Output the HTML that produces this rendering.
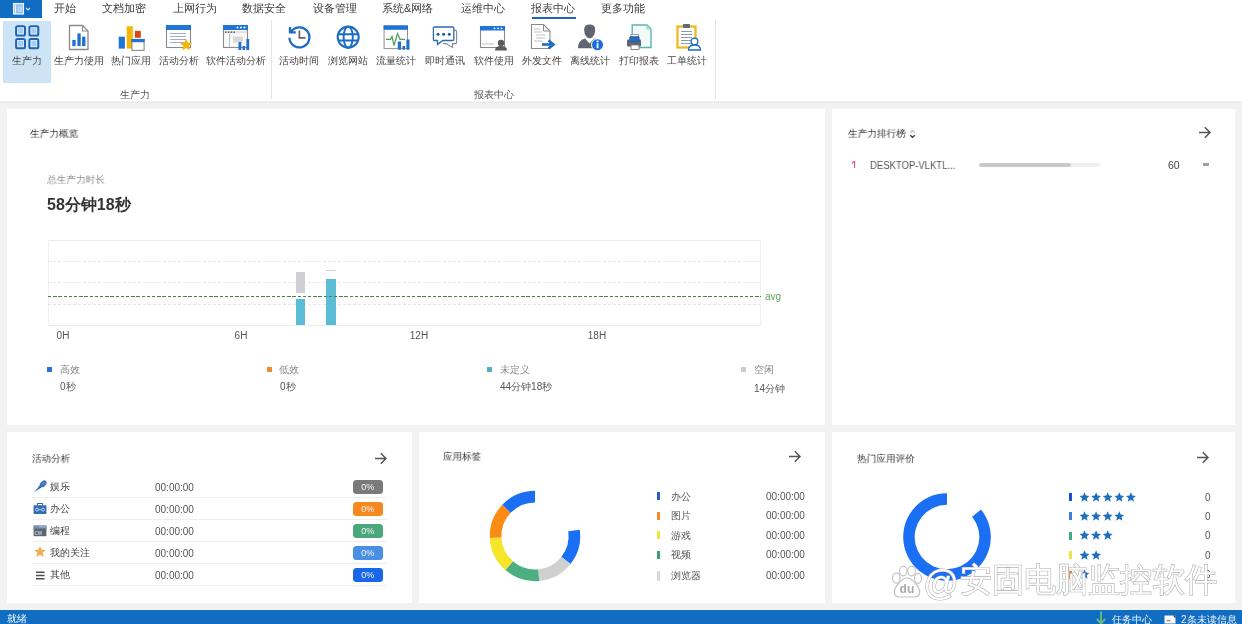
<!DOCTYPE html>
<html><head><meta charset="utf-8"><style>
html,body{margin:0;padding:0;}
body{width:1242px;height:624px;overflow:hidden;position:relative;font-family:"Liberation Sans", sans-serif;background:#f0f0f0;}
.t{position:absolute;white-space:nowrap;will-change:transform;}
.r{position:absolute;display:block;will-change:transform;}
</style></head><body>
<div class="r" style="left:0px;top:0px;width:1242px;height:101px;background:#ffffff;"></div>
<div class="r" style="left:0px;top:101px;width:1242px;height:509px;background:#f2f2f2;"></div>
<div class="r" style="left:0px;top:102px;width:1242px;height:1px;background:#e8e8e8;"></div>
<div class="r" style="left:0px;top:610px;width:1242px;height:14px;background:#106dc2;"></div>
<div class="r" style="left:0px;top:0px;width:42px;height:18px;background:#106dc2;"></div>
<svg class="r" style="left:12px;top:2px;" width="22" height="15" viewBox="0 0 22 15"><rect x="1.6" y="1.6" width="9.8" height="10.4" fill="#8fbdf0" stroke="#e8f2fc" stroke-width="1.3"/><path d="M3.6 2.5 V11.5" stroke="#f4f8ff" stroke-width="1.1"/><rect x="5.5" y="4" width="4.5" height="6" fill="#b5d3f5"/><path d="M14 6 l2 2 l2 -2" fill="none" stroke="#cfe2f7" stroke-width="1.1"/></svg>
<div class="t" style="left:54.0px;top:3px;font-size:11px;line-height:11px;color:#3a3a3a;font-weight:normal;">开始</div>
<div class="t" style="left:101.8px;top:3px;font-size:11px;line-height:11px;color:#3a3a3a;font-weight:normal;">文档加密</div>
<div class="t" style="left:172.8px;top:3px;font-size:11px;line-height:11px;color:#3a3a3a;font-weight:normal;">上网行为</div>
<div class="t" style="left:242.4px;top:3px;font-size:11px;line-height:11px;color:#3a3a3a;font-weight:normal;">数据安全</div>
<div class="t" style="left:312.5px;top:3px;font-size:11px;line-height:11px;color:#3a3a3a;font-weight:normal;">设备管理</div>
<div class="t" style="left:382.1px;top:3px;font-size:11px;line-height:11px;color:#3a3a3a;font-weight:normal;">系统&amp;网络</div>
<div class="t" style="left:461.2px;top:3px;font-size:11px;line-height:11px;color:#3a3a3a;font-weight:normal;">运维中心</div>
<div class="t" style="left:531.4px;top:3px;font-size:11px;line-height:11px;color:#3a3a3a;font-weight:normal;">报表中心</div>
<div class="t" style="left:600.9px;top:3px;font-size:11px;line-height:11px;color:#3a3a3a;font-weight:normal;">更多功能</div>
<div class="r" style="left:532px;top:16.5px;width:44px;height:2.0px;background:#1a66c0;"></div>
<div class="r" style="left:3px;top:21px;width:48px;height:62px;background:#cde4f7;"></div>
<div class="r" style="left:271px;top:20px;width:1px;height:79px;background:#e3e3e3;"></div>
<div class="r" style="left:715px;top:20px;width:1px;height:79px;background:#e3e3e3;"></div>
<div class="t" style="left:-72.6px;width:200px;text-align:center;top:56.3px;font-size:9.8px;line-height:9.8px;color:#474747;font-weight:normal;">生产力</div>
<div class="t" style="left:-20.799999999999997px;width:200px;text-align:center;top:56.3px;font-size:9.8px;line-height:9.8px;color:#474747;font-weight:normal;">生产力使用</div>
<div class="t" style="left:30.80000000000001px;width:200px;text-align:center;top:56.3px;font-size:9.8px;line-height:9.8px;color:#474747;font-weight:normal;">热门应用</div>
<div class="t" style="left:79.4px;width:200px;text-align:center;top:56.3px;font-size:9.8px;line-height:9.8px;color:#474747;font-weight:normal;">活动分析</div>
<div class="t" style="left:136.1px;width:200px;text-align:center;top:56.3px;font-size:9.8px;line-height:9.8px;color:#474747;font-weight:normal;">软件活动分析</div>
<div class="t" style="left:199.39999999999998px;width:200px;text-align:center;top:56.3px;font-size:9.8px;line-height:9.8px;color:#474747;font-weight:normal;">活动时间</div>
<div class="t" style="left:247.89999999999998px;width:200px;text-align:center;top:56.3px;font-size:9.8px;line-height:9.8px;color:#474747;font-weight:normal;">浏览网站</div>
<div class="t" style="left:296.2px;width:200px;text-align:center;top:56.3px;font-size:9.8px;line-height:9.8px;color:#474747;font-weight:normal;">流量统计</div>
<div class="t" style="left:344.8px;width:200px;text-align:center;top:56.3px;font-size:9.8px;line-height:9.8px;color:#474747;font-weight:normal;">即时通讯</div>
<div class="t" style="left:393.7px;width:200px;text-align:center;top:56.3px;font-size:9.8px;line-height:9.8px;color:#474747;font-weight:normal;">软件使用</div>
<div class="t" style="left:441.9px;width:200px;text-align:center;top:56.3px;font-size:9.8px;line-height:9.8px;color:#474747;font-weight:normal;">外发文件</div>
<div class="t" style="left:490.29999999999995px;width:200px;text-align:center;top:56.3px;font-size:9.8px;line-height:9.8px;color:#474747;font-weight:normal;">离线统计</div>
<div class="t" style="left:539px;width:200px;text-align:center;top:56.3px;font-size:9.8px;line-height:9.8px;color:#474747;font-weight:normal;">打印报表</div>
<div class="t" style="left:587.4px;width:200px;text-align:center;top:56.3px;font-size:9.8px;line-height:9.8px;color:#474747;font-weight:normal;">工单统计</div>
<div class="t" style="left:35.19999999999999px;width:200px;text-align:center;top:90px;font-size:10px;line-height:10px;color:#555;font-weight:normal;">生产力</div>
<div class="t" style="left:393.5px;width:200px;text-align:center;top:90px;font-size:10px;line-height:10px;color:#555;font-weight:normal;">报表中心</div>
<svg class="r" style="left:14px;top:25px;" width="27" height="26" viewBox="0 0 27 26"><rect x="2.1" y="1.2" width="8.9" height="9.3" rx="1.6" fill="#a9ccf0" stroke="#1f64b0" stroke-width="2"/><rect x="3.7" y="2.8" width="5.7" height="6.1" fill="none" stroke="#e6f1fc" stroke-width="0.7"/><rect x="2.1" y="14.0" width="8.9" height="9.3" rx="1.6" fill="#a9ccf0" stroke="#1f64b0" stroke-width="2"/><rect x="3.7" y="15.6" width="5.7" height="6.1" fill="none" stroke="#e6f1fc" stroke-width="0.7"/><rect x="15.4" y="1.2" width="8.9" height="9.3" rx="1.6" fill="#a9ccf0" stroke="#1f64b0" stroke-width="2"/><rect x="17.0" y="2.8" width="5.7" height="6.1" fill="none" stroke="#e6f1fc" stroke-width="0.7"/><rect x="15.4" y="14.0" width="8.9" height="9.3" rx="1.6" fill="#a9ccf0" stroke="#1f64b0" stroke-width="2"/><rect x="17.0" y="15.6" width="5.7" height="6.1" fill="none" stroke="#e6f1fc" stroke-width="0.7"/></svg>
<svg class="r" style="left:68px;top:24px;" width="22" height="27" viewBox="0 0 22 27"><path d="M1.5 1.5 H14.5 L20 7 V25.5 H1.5 Z" fill="#fff" stroke="#8a8a8a" stroke-width="1.3"/><path d="M14.5 1.5 V7 H20" fill="none" stroke="#8a8a8a" stroke-width="1.1"/><rect x="4.3" y="15.9" width="3.3" height="6.2" fill="#1a6fd0"/><rect x="9.4" y="9.4" width="3.3" height="12.7" fill="#1a6fd0"/><rect x="14.1" y="12.7" width="3.3" height="9.4" fill="#1a6fd0"/></svg>
<svg class="r" style="left:117px;top:25px;" width="29" height="27" viewBox="0 0 29 27"><rect x="1.7" y="11.7" width="6.2" height="11.9" fill="#1f74d6"/><rect x="9.7" y="1.2" width="6.1" height="22.4" fill="#f7b500"/><rect x="18" y="5.9" width="5.8" height="6.9" fill="#e0401a"/><rect x="14.9" y="14.5" width="12.2" height="10.9" fill="#fff" stroke="#8a8a8a" stroke-width="1.1"/><rect x="14.4" y="14" width="13.2" height="3.2" fill="#1f74d6"/></svg>
<svg class="r" style="left:165px;top:24px;" width="29" height="28" viewBox="0 0 29 28"><rect x="1.5" y="1.5" width="24" height="22" fill="#fff" stroke="#8a8a8a" stroke-width="1.1"/><rect x="1" y="1" width="25" height="5" fill="#1f74d6"/><rect x="5" y="9" width="16" height="1" fill="#a4aec0"/><rect x="5" y="12" width="16" height="1" fill="#a4aec0"/><rect x="5" y="15" width="16" height="1" fill="#a4aec0"/><rect x="5" y="18" width="16" height="1" fill="#a4aec0"/><polygon points="21.20,14.70 22.92,18.83 27.38,19.19 23.98,22.10 25.02,26.46 21.20,24.12 17.38,26.46 18.42,22.10 15.02,19.19 19.48,18.83" fill="#f7b500"/></svg>
<svg class="r" style="left:222px;top:24px;" width="29" height="28" viewBox="0 0 29 28"><rect x="1.5" y="1.5" width="24" height="22" fill="#fafafa" stroke="#8a8a8a" stroke-width="1.1"/><rect x="1" y="1" width="25" height="5" fill="#1f74d6"/><circle cx="15.5" cy="3.5" r="1" fill="#fff"/><circle cx="19" cy="3.5" r="1" fill="#fff"/><circle cx="22.5" cy="3.5" r="1" fill="#fff"/><rect x="2" y="7" width="23" height="2.2" fill="#e4e4e4"/><rect x="3" y="7.4" width="1.6" height="1.6" fill="#666"/><rect x="5.8" y="7.4" width="1.6" height="1.6" fill="#666"/><rect x="8.6" y="7.4" width="1.6" height="1.6" fill="#666"/><rect x="11.4" y="7.4" width="1.6" height="1.6" fill="#666"/><path d="M7.5 9.5 V23" stroke="#b0b0c0" stroke-width="0.8"/><rect x="11" y="12.5" width="10" height="6" fill="#d8d8d8"/><rect x="16.5" y="18" width="2.8" height="8" fill="#1f6fd0"/><rect x="20.6" y="22" width="2.6" height="4" fill="#1f6fd0"/><rect x="24.4" y="15" width="2.8" height="11" fill="#1f6fd0"/></svg>
<svg class="r" style="left:284px;top:22px;" width="30" height="30" viewBox="0 0 30 30"><path d="M6.74 10.4 A10 10 0 1 1 5.41 15.75" fill="none" stroke="#1a6cc4" stroke-width="2.3"/><path d="M6 5 V10.4 H11.8" fill="none" stroke="#1a6cc4" stroke-width="2.3" stroke-linejoin="miter"/><path d="M15.4 8.4 V15.9 H21.6" fill="none" stroke="#666" stroke-width="1.7"/></svg>
<svg class="r" style="left:335px;top:24px;" width="26" height="27" viewBox="0 0 26 27"><circle cx="13.2" cy="13.1" r="10.5" fill="none" stroke="#1a6cc4" stroke-width="2.1"/><ellipse cx="13.2" cy="13.1" rx="4.6" ry="10.5" fill="none" stroke="#1a6cc4" stroke-width="1.9"/><path d="M3 10.3 H23.4 M3 16.5 H23.4" stroke="#1a6cc4" stroke-width="1.9"/></svg>
<svg class="r" style="left:382px;top:24px;" width="29" height="27" viewBox="0 0 29 27"><rect x="2.1" y="2" width="23.4" height="22.6" fill="#fff" stroke="#8f8f9a" stroke-width="1"/><rect x="1.6" y="1.4" width="24.4" height="4.4" fill="#1f72d4"/><path d="M4 15.3 H8.5 L10 12.5 L12 21.5 L15.5 9.5 L18 15.3 H23" fill="none" stroke="#4f9c5c" stroke-width="1.2"/><rect x="15.8" y="17.5" width="3.2" height="8.2" fill="#1f6fd0"/><rect x="20.4" y="22" width="2.7" height="3.7" fill="#1f6fd0"/><rect x="24.4" y="15.5" width="3.1" height="10.2" fill="#1f6fd0"/></svg>
<svg class="r" style="left:432px;top:26px;" width="27" height="23" viewBox="0 0 27 23"><path d="M22 4.4 H23.4 Q24.6 4.4 24.6 5.6 V16.6 Q24.6 17.6 23.4 17.6 H20.5 V21.4 L14 17.6 H11" fill="none" stroke="#7d8799" stroke-width="1.1"/><path d="M2.6 1 H20.6 Q21.8 1 21.8 2.2 V13.3 Q21.8 14.5 20.6 14.5 H11 L5.5 18.4 V14.5 H2.6 Q1.4 14.5 1.4 13.3 V2.2 Q1.4 1 2.6 1 Z" fill="#fff" stroke="#2a6ab8" stroke-width="1.3"/><circle cx="6" cy="8.3" r="1.5" fill="#1c5a9c"/><circle cx="11.6" cy="8.3" r="1.5" fill="#1c5a9c"/><circle cx="17.3" cy="8.3" r="1.5" fill="#1c5a9c"/></svg>
<svg class="r" style="left:479px;top:25px;" width="29" height="26" viewBox="0 0 29 26"><rect x="1.5" y="1.5" width="24" height="21" fill="#fff" stroke="#8a8a8a" stroke-width="1.1"/><rect x="1" y="1" width="25" height="4.5" fill="#1f74d6"/><circle cx="15.5" cy="3.3" r="0.9" fill="#fff"/><circle cx="19" cy="3.3" r="0.9" fill="#fff"/><circle cx="22.5" cy="3.3" r="0.9" fill="#fff"/><rect x="3" y="18" width="12" height="2" fill="#dedede"/><circle cx="22" cy="18" r="3.2" fill="#5a5a5a"/><path d="M16 25.5 Q16 21 22 21 Q28 21 28 25.5 Z" fill="#5a5a5a"/></svg>
<svg class="r" style="left:530px;top:23px;" width="26" height="28" viewBox="0 0 26 28"><path d="M1.5 1.5 H13.5 L20 8 V25.5 H1.5 Z" fill="#fff" stroke="#8a8a8a" stroke-width="1.1"/><path d="M13.5 1.5 V8 H20" fill="none" stroke="#8a8a8a" stroke-width="1"/><path d="M4 6 H10 M4 9 H12 M6 12 H15 M6 15 H15 M4 18 H12" stroke="#c0c0c0" stroke-width="1"/><path d="M12 21.5 H21.5" stroke="#1a6cc4" stroke-width="2.6"/><path d="M18.5 17.5 L23.5 21.5 L18.5 25.5" fill="none" stroke="#1a6cc4" stroke-width="2.6"/></svg>
<svg class="r" style="left:576px;top:23px;" width="29" height="29" viewBox="0 0 29 29"><path d="M8.1 6.8 Q8.1 1.6 13.6 1.6 Q19.2 1.6 19.2 6.8 Q19.2 11.5 16.6 14 Q15 15.3 13.6 15.3 Q12.2 15.3 10.7 14 Q8.1 11.5 8.1 6.8 Z" fill="#5f6672"/><path d="M2 25.2 Q2 17.5 9 15.6 L13.6 20.5 L18.2 15.6 Q21 16.3 23 18 V25.2 Z" fill="#5f6672"/><circle cx="21.5" cy="21.8" r="6" fill="#1a6cd8" stroke="#fff" stroke-width="1"/><rect x="20.6" y="20.3" width="1.9" height="5" fill="#e8f4ff"/><circle cx="21.55" cy="18.4" r="1.1" fill="#e8f4ff"/></svg>
<svg class="r" style="left:625px;top:23px;" width="28" height="28" viewBox="0 0 28 28"><path d="M7.2 2 H22 L26 6 V24.5 H7.2 Z" fill="#f2fafa" stroke="#5bb5b0" stroke-width="1.4"/><path d="M22 2 V6 H26" fill="none" stroke="#8ccac6" stroke-width="1"/><rect x="6" y="11.5" width="7.5" height="3" fill="#fff" stroke="#8a8a8a" stroke-width="0.8"/><rect x="2" y="16.5" width="14" height="7" rx="1.2" fill="#5a6676"/><rect x="4.6" y="13.6" width="9.6" height="5" rx="1" fill="#1f6fd0" stroke="#3a4a6a" stroke-width="0.6"/><rect x="6" y="22" width="8" height="4.5" fill="#fff" stroke="#7a7a7a" stroke-width="0.9"/></svg>
<svg class="r" style="left:675px;top:22px;" width="29" height="30" viewBox="0 0 29 30"><rect x="2.5" y="4.5" width="18" height="21" fill="#fff" stroke="#f2b51a" stroke-width="2.2"/><rect x="8" y="2" width="7" height="4" rx="1" fill="#5a6a7a"/><rect x="6" y="9" width="11" height="1" fill="#8a9aaa"/><rect x="6" y="12" width="11" height="1" fill="#8a9aaa"/><rect x="6" y="15" width="11" height="1" fill="#8a9aaa"/><rect x="6" y="18" width="11" height="1" fill="#8a9aaa"/><rect x="6" y="21" width="11" height="1" fill="#8a9aaa"/><circle cx="19.5" cy="19.5" r="3.3" fill="#fff" stroke="#1a6cc4" stroke-width="1.3"/><path d="M13.5 28 Q13.5 23 19.5 23 Q25.5 23 25.5 28 Z" fill="#fff" stroke="#1a6cc4" stroke-width="1.3"/></svg>
<div class="r" style="left:7px;top:109px;width:818px;height:316px;background:#ffffff;"></div>
<div class="r" style="left:832px;top:109px;width:403px;height:316px;background:#ffffff;"></div>
<div class="r" style="left:7px;top:432px;width:405px;height:171px;background:#ffffff;"></div>
<div class="r" style="left:419px;top:432px;width:406px;height:171px;background:#ffffff;"></div>
<div class="r" style="left:832px;top:432px;width:403px;height:171px;background:#ffffff;"></div>
<div class="t" style="left:30.2px;top:128.6px;font-size:10px;line-height:10px;color:#333;font-weight:normal;transform:scale(0.965);transform-origin:0 0;">生产力概览</div>
<div class="t" style="left:46.7px;top:175.3px;font-size:10px;line-height:10px;color:#888;font-weight:normal;transform:scale(0.965);transform-origin:0 0;">总生产力时长</div>
<div class="t" style="left:46.8px;top:196.5px;font-size:16px;line-height:16px;color:#333;font-weight:bold;">58分钟18秒</div>
<div class="r" style="left:48px;top:240px;width:713px;height:1px;background:#ececec;"></div>
<div class="r" style="left:48px;top:324.5px;width:713px;height:1.0px;background:#ebebeb;"></div>
<div class="r" style="left:48px;top:240px;width:1px;height:85px;background:#f0f0f0;"></div>
<div class="r" style="left:760px;top:240px;width:1px;height:85px;background:#f0f0f0;"></div>
<div class="r" style="left:48px;top:261px;width:713px;height:1px;background:repeating-linear-gradient(90deg,#e6e6e6 0 3px,transparent 3px 5px)"></div>
<div class="r" style="left:48px;top:282px;width:713px;height:1px;background:repeating-linear-gradient(90deg,#e6e6e6 0 3px,transparent 3px 5px)"></div>
<div class="r" style="left:48px;top:303.5px;width:713px;height:1px;background:repeating-linear-gradient(90deg,#e6e6e6 0 3px,transparent 3px 5px)"></div>
<div class="r" style="left:296px;top:271.7px;width:9px;height:21.100000000000023px;background:#cfcfd4;"></div>
<div class="r" style="left:296px;top:298.6px;width:9px;height:26.399999999999977px;background:#5bbcd6;"></div>
<div class="r" style="left:325.5px;top:269.5px;width:9.5px;height:1.1999999999999886px;background:#d2d2d6;"></div>
<div class="r" style="left:325.5px;top:278.7px;width:9.5px;height:46.30000000000001px;background:#5bbcd6;"></div>
<div class="r" style="left:48px;top:295.8px;width:713px;height:1px;background:repeating-linear-gradient(90deg,#4b7f4b 0 3.4px,transparent 3.4px 5.2px)"></div>
<div class="t" style="left:765px;top:292px;font-size:10px;line-height:10px;color:#5d9f5d;font-weight:normal;">avg</div>
<div class="t" style="left:-37.5px;width:200px;text-align:center;top:330.5px;font-size:10px;line-height:10px;color:#555;font-weight:normal;">0H</div>
<div class="t" style="left:140.7px;width:200px;text-align:center;top:330.5px;font-size:10px;line-height:10px;color:#555;font-weight:normal;">6H</div>
<div class="t" style="left:318.9px;width:200px;text-align:center;top:330.5px;font-size:10px;line-height:10px;color:#555;font-weight:normal;">12H</div>
<div class="t" style="left:497.0999999999999px;width:200px;text-align:center;top:330.5px;font-size:10px;line-height:10px;color:#555;font-weight:normal;">18H</div>
<div class="r" style="left:47px;top:366.8px;width:5px;height:5.0px;background:#2f6fd8;"></div>
<div class="t" style="left:59.7px;top:365px;font-size:10px;line-height:10px;color:#888;font-weight:normal;">高效</div>
<div class="t" style="left:60.0px;top:382px;font-size:10px;line-height:10px;color:#555;font-weight:normal;">0秒</div>
<div class="r" style="left:266.6px;top:366.8px;width:5.0px;height:5.0px;background:#f08a30;"></div>
<div class="t" style="left:279.2px;top:365px;font-size:10px;line-height:10px;color:#888;font-weight:normal;">低效</div>
<div class="t" style="left:279.5px;top:382px;font-size:10px;line-height:10px;color:#555;font-weight:normal;">0秒</div>
<div class="r" style="left:487.2px;top:366.8px;width:5.0px;height:5.0px;background:#50b0c8;"></div>
<div class="t" style="left:499.7px;top:365px;font-size:10px;line-height:10px;color:#888;font-weight:normal;">未定义</div>
<div class="t" style="left:500.0px;top:382px;font-size:10px;line-height:10px;color:#555;font-weight:normal;">44分钟18秒</div>
<div class="r" style="left:741px;top:366.8px;width:5px;height:5.0px;background:#cccccc;"></div>
<div class="t" style="left:753.7px;top:365px;font-size:10px;line-height:10px;color:#888;font-weight:normal;">空闲</div>
<div class="t" style="left:754.0px;top:384px;font-size:10px;line-height:10px;color:#555;font-weight:normal;">14分钟</div>
<div class="t" style="left:848.3px;top:129px;font-size:10px;line-height:10px;color:#333;font-weight:normal;transform:scale(0.965);transform-origin:0 0;">生产力排行榜</div>
<svg class="r" style="left:909px;top:129px;" width="7" height="10" viewBox="0 0 7 10"><path d="M1.2 3.6 L3.5 1.5 L5.8 3.6" fill="none" stroke="#b4b4b4" stroke-width="1.1"/><path d="M1.2 6.2 L3.5 8.3 L5.8 6.2" fill="none" stroke="#2b3d5e" stroke-width="1.3"/></svg>
<svg class="r" style="left:1197.5px;top:126px;" width="14" height="13" viewBox="0 0 14 13"><path d="M1 6.5 H12 M6.8 1.2 L12 6.5 L6.8 11.8" fill="none" stroke="#555" stroke-width="1.5"/></svg>
<svg class="r" style="left:850px;top:160px;" width="8" height="9" viewBox="0 0 8 9"><path d="M4.6 1 V8 M4.6 1.2 L2 3.2" fill="none" stroke="#d9557a" stroke-width="1.1"/></svg>
<div class="t" style="left:870.2px;top:160.8px;font-size:10px;line-height:10px;color:#555;font-weight:normal;transform:scaleX(0.95);transform-origin:0 0;">DESKTOP-VLKTL...</div>
<div class="r" style="left:978.5px;top:162.5px;width:120.79999999999995px;height:4.0px;background:#f0f0f0;border-radius:2px"></div>
<div class="r" style="left:978.5px;top:162.5px;width:92.0px;height:4.0px;background:#c9c9c9;border-radius:2px"></div>
<div class="t" style="left:1168px;top:160px;font-size:10.5px;line-height:10.5px;color:#444;font-weight:normal;">60</div>
<div class="r" style="left:1202.5px;top:162.8px;width:6.0px;height:2.5px;background:#a0a0a0;"></div>
<div class="t" style="left:31.8px;top:454.2px;font-size:10px;line-height:10px;color:#333;font-weight:normal;transform:scale(0.955);transform-origin:0 0;">活动分析</div>
<svg class="r" style="left:373.5px;top:451.5px;" width="14" height="13" viewBox="0 0 14 13"><path d="M1 6.5 H12 M6.8 1.2 L12 6.5 L6.8 11.8" fill="none" stroke="#555" stroke-width="1.5"/></svg>
<div class="t" style="left:50px;top:482.2px;font-size:10px;line-height:10px;color:#444;font-weight:normal;">娱乐</div>
<div class="t" style="left:155px;top:482.5px;font-size:10px;line-height:10px;color:#555;font-weight:normal;">00:00:00</div>
<div class="t" style="left:352.8px;top:479.8px;width:29.6px;height:13.8px;border-radius:3.5px;background:#7a7a7a;color:#f4f4f4;font-size:9px;line-height:15.5px;text-align:center">0%</div>
<div class="r" style="left:31.5px;top:497px;width:355.0px;height:1px;background:#eeeeee;"></div>
<div class="t" style="left:50px;top:504.2px;font-size:10px;line-height:10px;color:#444;font-weight:normal;">办公</div>
<div class="t" style="left:155px;top:504.5px;font-size:10px;line-height:10px;color:#555;font-weight:normal;">00:00:00</div>
<div class="t" style="left:352.8px;top:501.8px;width:29.6px;height:13.8px;border-radius:3.5px;background:#f5891f;color:#f4f4f4;font-size:9px;line-height:15.5px;text-align:center">0%</div>
<div class="r" style="left:31.5px;top:519px;width:355.0px;height:1px;background:#eeeeee;"></div>
<div class="t" style="left:50px;top:526.2px;font-size:10px;line-height:10px;color:#444;font-weight:normal;">编程</div>
<div class="t" style="left:155px;top:526.5px;font-size:10px;line-height:10px;color:#555;font-weight:normal;">00:00:00</div>
<div class="t" style="left:352.8px;top:523.8px;width:29.6px;height:13.8px;border-radius:3.5px;background:#4aa87a;color:#f4f4f4;font-size:9px;line-height:15.5px;text-align:center">0%</div>
<div class="r" style="left:31.5px;top:541px;width:355.0px;height:1px;background:#eeeeee;"></div>
<div class="t" style="left:50px;top:548.2px;font-size:10px;line-height:10px;color:#444;font-weight:normal;">我的关注</div>
<div class="t" style="left:155px;top:548.5px;font-size:10px;line-height:10px;color:#555;font-weight:normal;">00:00:00</div>
<div class="t" style="left:352.8px;top:545.8px;width:29.6px;height:13.8px;border-radius:3.5px;background:#4a8fe6;color:#f4f4f4;font-size:9px;line-height:15.5px;text-align:center">0%</div>
<div class="r" style="left:31.5px;top:563px;width:355.0px;height:1px;background:#eeeeee;"></div>
<div class="t" style="left:50px;top:570.2px;font-size:10px;line-height:10px;color:#444;font-weight:normal;">其他</div>
<div class="t" style="left:155px;top:570.5px;font-size:10px;line-height:10px;color:#555;font-weight:normal;">00:00:00</div>
<div class="t" style="left:352.8px;top:567.8px;width:29.6px;height:13.8px;border-radius:3.5px;background:#1a66e8;color:#f4f4f4;font-size:9px;line-height:15.5px;text-align:center">0%</div>
<div class="r" style="left:31.5px;top:585px;width:355.0px;height:1px;background:#eeeeee;"></div>
<svg class="r" style="left:33px;top:480px;" width="14" height="13" viewBox="0 0 14 13"><path d="M1.2 12.2 L7.6 4.3 L9.9 6.6 Z" fill="#3a6cb0"/><ellipse cx="10.2" cy="3.8" rx="3.9" ry="2.7" transform="rotate(-45 10.2 3.8)" fill="#3f72b8"/><path d="M8.5 2.8 L11.2 5.5 M10 1.6 L12.4 4" stroke="#7fa6d8" stroke-width="0.6"/></svg>
<svg class="r" style="left:33px;top:501.5px;" width="14" height="13" viewBox="0 0 14 13"><path d="M4.5 3.5 V1.5 H9.5 V3.5" fill="none" stroke="#3a6cb0" stroke-width="1.1"/><rect x="0.6" y="3.2" width="12.8" height="8.8" rx="0.8" fill="#2f6bb5"/><path d="M3 7.6 H11" stroke="#cfe0f5" stroke-width="0.7"/><circle cx="4" cy="7.6" r="1.5" fill="#2f6bb5" stroke="#dfeaf8" stroke-width="0.8"/><circle cx="10" cy="7.6" r="1.5" fill="#2f6bb5" stroke="#dfeaf8" stroke-width="0.8"/></svg>
<svg class="r" style="left:33px;top:524.5px;" width="14" height="12" viewBox="0 0 14 12"><rect x="0.6" y="0.6" width="12.8" height="10.6" fill="#5b6571"/><rect x="0.6" y="0.6" width="12.8" height="3" fill="#6f8fb3"/><rect x="6" y="1.2" width="6.5" height="1.2" fill="#9fb8d6"/><text x="1.6" y="10" font-size="4.6" font-weight="bold" fill="#c8ccd2" font-family="Liberation Sans">CM</text></svg>
<svg class="r" style="left:33px;top:545.2px;" width="14" height="13" viewBox="0 0 14 13"><polygon points="7.00,0.80 8.64,4.74 12.90,5.08 9.65,7.86 10.64,12.02 7.00,9.79 3.36,12.02 4.35,7.86 1.10,5.08 5.36,4.74" fill="#eeb050"/></svg>
<svg class="r" style="left:34px;top:570.5px;" width="12" height="10" viewBox="0 0 12 10"><path d="M2 1.3 H10.6 M2 4.5 H10.6 M2 7.7 H10.6" stroke="#505050" stroke-width="1.6"/></svg>
<div class="t" style="left:443.2px;top:452px;font-size:10px;line-height:10px;color:#333;font-weight:normal;transform:scale(0.955);transform-origin:0 0;">应用标签</div>
<svg class="r" style="left:787.8px;top:449.5px;" width="14" height="13" viewBox="0 0 14 13"><path d="M1 6.5 H12 M6.8 1.2 L12 6.5 L6.8 11.8" fill="none" stroke="#555" stroke-width="1.5"/></svg>
<svg class="r" style="left:484.6px;top:486.2px;" width="100" height="100" viewBox="0 0 100 100"><path d="M94.76 43.71 A45.2 45.2 0 0 1 85.46 78.03 L76.36 70.84 A33.6 33.6 0 0 0 83.27 45.32 Z" fill="#1a6ff5"/><path d="M85.46 78.03 A45.2 45.2 0 0 1 54.21 95.00 L53.13 83.45 A33.6 33.6 0 0 0 76.36 70.84 Z" fill="#d0d0d0"/><path d="M54.21 95.00 A45.2 45.2 0 0 1 20.35 84.12 L27.96 75.36 A33.6 33.6 0 0 0 53.13 83.45 Z" fill="#4caf82"/><path d="M20.35 84.12 A45.2 45.2 0 0 1 4.85 52.11 L16.44 51.57 A33.6 33.6 0 0 0 27.96 75.36 Z" fill="#f5e62a"/><path d="M4.85 52.11 A45.2 45.2 0 0 1 17.29 18.80 L25.69 26.81 A33.6 33.6 0 0 0 16.44 51.57 Z" fill="#fa8c16"/><path d="M17.29 18.80 A45.2 45.2 0 0 1 49.98 4.80 L49.99 16.40 A33.6 33.6 0 0 0 25.69 26.81 Z" fill="#1a6ff5"/></svg>
<div class="r" style="left:656.7px;top:492.3px;width:3.0px;height:8.0px;background:#1d5fd6;"></div>
<div class="t" style="left:670.6px;top:491.8px;font-size:10px;line-height:10px;color:#555;font-weight:normal;">办公</div>
<div class="t" style="left:765.8px;top:492.0px;font-size:10px;line-height:10px;color:#555;font-weight:normal;">00:00:00</div>
<div class="r" style="left:656.7px;top:511.70000000000005px;width:3.0px;height:8.0px;background:#f08a2a;"></div>
<div class="t" style="left:670.6px;top:511.20000000000005px;font-size:10px;line-height:10px;color:#555;font-weight:normal;">图片</div>
<div class="t" style="left:765.8px;top:511.40000000000003px;font-size:10px;line-height:10px;color:#555;font-weight:normal;">00:00:00</div>
<div class="r" style="left:656.7px;top:531.1px;width:3.0px;height:8.0px;background:#f0e640;"></div>
<div class="t" style="left:670.6px;top:530.6px;font-size:10px;line-height:10px;color:#555;font-weight:normal;">游戏</div>
<div class="t" style="left:765.8px;top:530.8000000000001px;font-size:10px;line-height:10px;color:#555;font-weight:normal;">00:00:00</div>
<div class="r" style="left:656.7px;top:550.5px;width:3.0px;height:8.0px;background:#3c9e72;"></div>
<div class="t" style="left:670.6px;top:550.0px;font-size:10px;line-height:10px;color:#555;font-weight:normal;">视频</div>
<div class="t" style="left:765.8px;top:550.2px;font-size:10px;line-height:10px;color:#555;font-weight:normal;">00:00:00</div>
<div class="r" style="left:656.7px;top:570.6999999999999px;width:3.0px;height:9.5px;background:#d8d8d8;"></div>
<div class="t" style="left:670.6px;top:570.6999999999999px;font-size:10px;line-height:10px;color:#555;font-weight:normal;">浏览器</div>
<div class="t" style="left:765.8px;top:570.9px;font-size:10px;line-height:10px;color:#555;font-weight:normal;">00:00:00</div>
<div class="t" style="left:857.2px;top:454px;font-size:10px;line-height:10px;color:#333;font-weight:normal;transform:scale(0.965);transform-origin:0 0;">热门应用评价</div>
<svg class="r" style="left:1195.5px;top:450.5px;" width="14" height="13" viewBox="0 0 14 13"><path d="M1 6.5 H12 M6.8 1.2 L12 6.5 L6.8 11.8" fill="none" stroke="#555" stroke-width="1.5"/></svg>
<svg class="r" style="left:896.7px;top:486.8px;" width="100" height="100" viewBox="0 0 100 100"><path d="M84.04 22.44 A43.8 43.8 0 1 1 49.99 6.20 L49.99 17.70 A32.3 32.3 0 1 0 75.10 29.67 Z" fill="#1a6ff5"/></svg>
<div class="r" style="left:1068.5px;top:493.0px;width:3.0px;height:8.0px;background:#1a50c8;"></div>
<svg class="r" style="left:1079px;top:491.5px;" width="70" height="12" viewBox="0 0 70 12"><polygon points="5.50,0.30 6.88,3.61 10.45,3.89 7.73,6.22 8.56,9.71 5.50,7.84 2.44,9.71 3.27,6.22 0.55,3.89 4.12,3.61" fill="#1f6fc0"/><polygon points="17.10,0.30 18.48,3.61 22.05,3.89 19.33,6.22 20.16,9.71 17.10,7.84 14.04,9.71 14.87,6.22 12.15,3.89 15.72,3.61" fill="#1f6fc0"/><polygon points="28.70,0.30 30.08,3.61 33.65,3.89 30.93,6.22 31.76,9.71 28.70,7.84 25.64,9.71 26.47,6.22 23.75,3.89 27.32,3.61" fill="#1f6fc0"/><polygon points="40.30,0.30 41.68,3.61 45.25,3.89 42.53,6.22 43.36,9.71 40.30,7.84 37.24,9.71 38.07,6.22 35.35,3.89 38.92,3.61" fill="#1f6fc0"/><polygon points="51.90,0.30 53.28,3.61 56.85,3.89 54.13,6.22 54.96,9.71 51.90,7.84 48.84,9.71 49.67,6.22 46.95,3.89 50.52,3.61" fill="#1f6fc0"/></svg>
<div class="t" style="left:1204.5px;top:492.5px;font-size:10px;line-height:10px;color:#555;font-weight:normal;">0</div>
<div class="r" style="left:1068.5px;top:512.4px;width:3.0px;height:8.0px;background:#3a80d8;"></div>
<svg class="r" style="left:1079px;top:510.9px;" width="70" height="12" viewBox="0 0 70 12"><polygon points="5.50,0.30 6.88,3.61 10.45,3.89 7.73,6.22 8.56,9.71 5.50,7.84 2.44,9.71 3.27,6.22 0.55,3.89 4.12,3.61" fill="#1f6fc0"/><polygon points="17.10,0.30 18.48,3.61 22.05,3.89 19.33,6.22 20.16,9.71 17.10,7.84 14.04,9.71 14.87,6.22 12.15,3.89 15.72,3.61" fill="#1f6fc0"/><polygon points="28.70,0.30 30.08,3.61 33.65,3.89 30.93,6.22 31.76,9.71 28.70,7.84 25.64,9.71 26.47,6.22 23.75,3.89 27.32,3.61" fill="#1f6fc0"/><polygon points="40.30,0.30 41.68,3.61 45.25,3.89 42.53,6.22 43.36,9.71 40.30,7.84 37.24,9.71 38.07,6.22 35.35,3.89 38.92,3.61" fill="#1f6fc0"/></svg>
<div class="t" style="left:1204.5px;top:511.9px;font-size:10px;line-height:10px;color:#555;font-weight:normal;">0</div>
<div class="r" style="left:1068.5px;top:531.8px;width:3.0px;height:8.0px;background:#3aaa82;"></div>
<svg class="r" style="left:1079px;top:530.3px;" width="70" height="12" viewBox="0 0 70 12"><polygon points="5.50,0.30 6.88,3.61 10.45,3.89 7.73,6.22 8.56,9.71 5.50,7.84 2.44,9.71 3.27,6.22 0.55,3.89 4.12,3.61" fill="#1f6fc0"/><polygon points="17.10,0.30 18.48,3.61 22.05,3.89 19.33,6.22 20.16,9.71 17.10,7.84 14.04,9.71 14.87,6.22 12.15,3.89 15.72,3.61" fill="#1f6fc0"/><polygon points="28.70,0.30 30.08,3.61 33.65,3.89 30.93,6.22 31.76,9.71 28.70,7.84 25.64,9.71 26.47,6.22 23.75,3.89 27.32,3.61" fill="#1f6fc0"/></svg>
<div class="t" style="left:1204.5px;top:531.3px;font-size:10px;line-height:10px;color:#555;font-weight:normal;">0</div>
<div class="r" style="left:1068.5px;top:551.2px;width:3.0px;height:8.0px;background:#f0e040;"></div>
<svg class="r" style="left:1079px;top:549.7px;" width="70" height="12" viewBox="0 0 70 12"><polygon points="5.50,0.30 6.88,3.61 10.45,3.89 7.73,6.22 8.56,9.71 5.50,7.84 2.44,9.71 3.27,6.22 0.55,3.89 4.12,3.61" fill="#1f6fc0"/><polygon points="17.10,0.30 18.48,3.61 22.05,3.89 19.33,6.22 20.16,9.71 17.10,7.84 14.04,9.71 14.87,6.22 12.15,3.89 15.72,3.61" fill="#1f6fc0"/></svg>
<div class="t" style="left:1204.5px;top:550.7px;font-size:10px;line-height:10px;color:#555;font-weight:normal;">0</div>
<div class="r" style="left:1068.5px;top:570.6px;width:3.0px;height:8.0px;background:#f08a2a;"></div>
<svg class="r" style="left:1079px;top:569.1px;" width="70" height="12" viewBox="0 0 70 12"><polygon points="5.50,0.30 6.88,3.61 10.45,3.89 7.73,6.22 8.56,9.71 5.50,7.84 2.44,9.71 3.27,6.22 0.55,3.89 4.12,3.61" fill="#1f6fc0"/></svg>
<div class="t" style="left:1204.5px;top:570.1px;font-size:10px;line-height:10px;color:#555;font-weight:normal;">0</div>
<svg class="r" style="left:880px;top:555px" width="360" height="54" viewBox="0 0 360 54"><g fill="#fff" stroke="#c2c2c2" stroke-width="1.2"><ellipse cx="16.3" cy="23" rx="3.8" ry="5.2"/><ellipse cx="23.3" cy="16" rx="3.8" ry="4.8"/><ellipse cx="31.6" cy="16" rx="3.8" ry="4.8"/><ellipse cx="38" cy="23.3" rx="3.5" ry="5"/><path d="M14.3 37 Q14.3 33 19 28 Q23 23 27 23 Q31 23 35 28 Q39.7 33 39.7 37 Q39.7 42 34 42 H20 Q14.3 42 14.3 37 Z"/></g><text x="19.6" y="38.4" font-size="12" font-weight="bold" font-family="Liberation Sans" fill="#aaa">du</text><text x="43.3" y="40" font-size="35" font-family="Liberation Sans, sans-serif" fill="#fff" stroke="#b0b0b0" stroke-width="1.2" paint-order="stroke">@</text><text x="79.5" y="36.2" font-size="32.5" textLength="257.5" lengthAdjust="spacingAndGlyphs" font-weight="500" font-family="Liberation Sans, sans-serif" fill="#fff" stroke="#b0b0b0" stroke-width="1.2" paint-order="stroke">安固电脑监控软件</text></svg>
<div class="t" style="left:7px;top:614px;font-size:10px;line-height:10px;color:#fff;font-weight:normal;">就绪</div>
<svg class="r" style="left:1094px;top:611px;" width="14" height="13" viewBox="0 0 14 13"><path d="M7 0.5 V12.5 M2.8 8 L7 12.5 L11.2 8" fill="none" stroke="#6cb878" stroke-width="1.9"/></svg>
<div class="t" style="left:1112px;top:614.5px;font-size:10px;line-height:10px;color:#f4f8fc;font-weight:normal;">任务中心</div>
<svg class="r" style="left:1164px;top:614.5px;" width="13" height="10" viewBox="0 0 13 10"><rect x="0.5" y="0.5" width="11" height="8" fill="#fafafa"/><path d="M8.8 0.5 H11.5 V3.2 Z" fill="#333"/><rect x="2.5" y="5" width="4" height="1.3" fill="#a09080"/></svg>
<div class="t" style="left:1181px;top:614.5px;font-size:10px;line-height:10px;color:#f4f8fc;font-weight:normal;">2条未读信息</div>
</body></html>
